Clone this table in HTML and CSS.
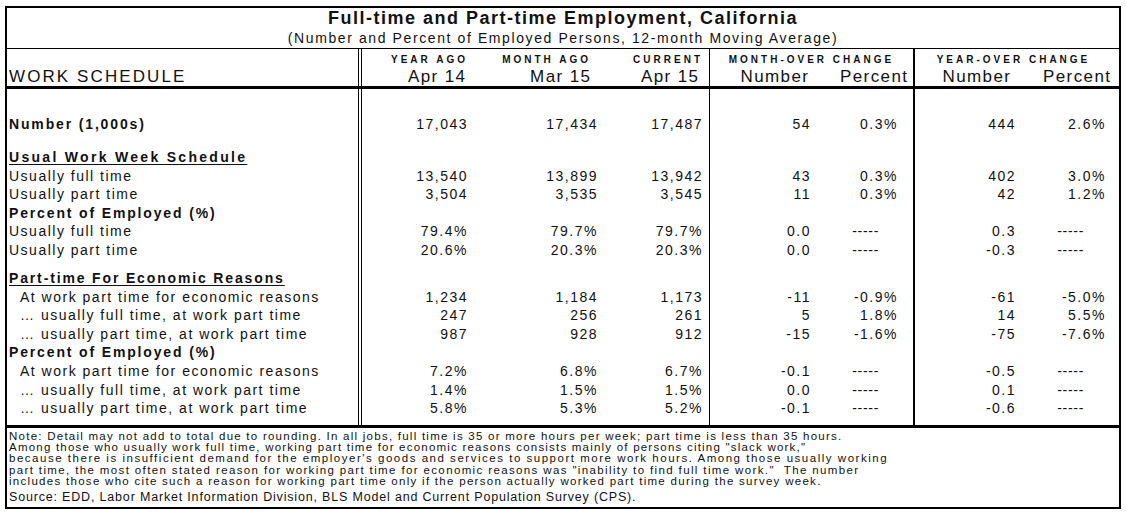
FILE: index.html
```html
<!DOCTYPE html>
<html>
<head>
<meta charset="utf-8">
<title>Full-time and Part-time Employment, California</title>
<link rel="stylesheet" href="styles.css">
</head>
<body>
<div class="sheet">
  <div class="titlebox">
    <div class="title">Full-time and Part-time Employment, California</div>
    <div class="subtitle">(Number and Percent of Employed Persons, 12-month Moving Average)</div>
  </div>

  <div class="head">
    <div class="h-lab">WORK SCHEDULE</div>
    <div class="cap k2 bl-dbl">YEAR AGO</div>
    <div class="cap k3 pr7">MONTH AGO</div>
    <div class="cap k4 pr6">CURRENT</div>
    <div class="cap mspan bl-1">MONTH-OVER CHANGE</div>
    <div class="cap yspan bl-2">YEAR-OVER CHANGE</div>
    <div class="big k2 bl-dbl hp1">Apr 14</div>
    <div class="big k3 hp2">Mar 15</div>
    <div class="big k4 hp3">Apr 15</div>
    <div class="big k5 bl-1 hp4">Number</div>
    <div class="big k6 hp5">Percent</div>
    <div class="big k7 bl-2 hp6">Number</div>
    <div class="big k8 hp7">Percent</div>
  </div>

  <div class="body">
    <div class="row g-a">
      <div class="lab b">Number (1,000s)</div>
      <div class="v1">17,043</div><div class="v2">17,434</div><div class="v3">17,487</div>
      <div class="m1">54</div><div class="m2">0.3%</div>
      <div class="y1">444</div><div class="y2">2.6%</div>
    </div>
    <div class="row g-b">
      <div class="lab b wide"><span class="u">Usual Work Week Schedule</span></div>
      <div class="v1"></div><div class="v2"></div><div class="v3"></div>
      <div class="m1"></div><div class="m2"></div>
      <div class="y1"></div><div class="y2"></div>
    </div>
    <div class="row">
      <div class="lab">Usually full time</div>
      <div class="v1">13,540</div><div class="v2">13,899</div><div class="v3">13,942</div>
      <div class="m1">43</div><div class="m2">0.3%</div>
      <div class="y1">402</div><div class="y2">3.0%</div>
    </div>
    <div class="row">
      <div class="lab">Usually part time</div>
      <div class="v1">3,504</div><div class="v2">3,535</div><div class="v3">3,545</div>
      <div class="m1">11</div><div class="m2">0.3%</div>
      <div class="y1">42</div><div class="y2">1.2%</div>
    </div>
    <div class="row">
      <div class="lab b">Percent of Employed (%)</div>
      <div class="v1"></div><div class="v2"></div><div class="v3"></div>
      <div class="m1"></div><div class="m2"></div>
      <div class="y1"></div><div class="y2"></div>
    </div>
    <div class="row">
      <div class="lab">Usually full time</div>
      <div class="v1">79.4%</div><div class="v2">79.7%</div><div class="v3">79.7%</div>
      <div class="m1">0.0</div><div class="m2 dash">-----</div>
      <div class="y1">0.3</div><div class="y2 dash">-----</div>
    </div>
    <div class="row">
      <div class="lab">Usually part time</div>
      <div class="v1">20.6%</div><div class="v2">20.3%</div><div class="v3">20.3%</div>
      <div class="m1">0.0</div><div class="m2 dash">-----</div>
      <div class="y1">-0.3</div><div class="y2 dash">-----</div>
    </div>
    <div class="row g-c">
      <div class="lab b"><span class="u">Part-time For Economic Reasons</span></div>
      <div class="v1"></div><div class="v2"></div><div class="v3"></div>
      <div class="m1"></div><div class="m2"></div>
      <div class="y1"></div><div class="y2"></div>
    </div>
    <div class="row">
      <div class="lab ind">At work part time for economic reasons</div>
      <div class="v1">1,234</div><div class="v2">1,184</div><div class="v3">1,173</div>
      <div class="m1">-11</div><div class="m2">-0.9%</div>
      <div class="y1">-61</div><div class="y2">-5.0%</div>
    </div>
    <div class="row">
      <div class="lab ind">… usually full time, at work part time</div>
      <div class="v1">247</div><div class="v2">256</div><div class="v3">261</div>
      <div class="m1">5</div><div class="m2">1.8%</div>
      <div class="y1">14</div><div class="y2">5.5%</div>
    </div>
    <div class="row">
      <div class="lab ind">… usually part time, at work part time</div>
      <div class="v1">987</div><div class="v2">928</div><div class="v3">912</div>
      <div class="m1">-15</div><div class="m2">-1.6%</div>
      <div class="y1">-75</div><div class="y2">-7.6%</div>
    </div>
    <div class="row">
      <div class="lab b">Percent of Employed (%)</div>
      <div class="v1"></div><div class="v2"></div><div class="v3"></div>
      <div class="m1"></div><div class="m2"></div>
      <div class="y1"></div><div class="y2"></div>
    </div>
    <div class="row">
      <div class="lab ind">At work part time for economic reasons</div>
      <div class="v1">7.2%</div><div class="v2">6.8%</div><div class="v3">6.7%</div>
      <div class="m1">-0.1</div><div class="m2 dash">-----</div>
      <div class="y1">-0.5</div><div class="y2 dash">-----</div>
    </div>
    <div class="row">
      <div class="lab ind">… usually full time, at work part time</div>
      <div class="v1">1.4%</div><div class="v2">1.5%</div><div class="v3">1.5%</div>
      <div class="m1">0.0</div><div class="m2 dash">-----</div>
      <div class="y1">0.1</div><div class="y2 dash">-----</div>
    </div>
    <div class="row g-end">
      <div class="lab ind">… usually part time, at work part time</div>
      <div class="v1">5.8%</div><div class="v2">5.3%</div><div class="v3">5.2%</div>
      <div class="m1">-0.1</div><div class="m2 dash">-----</div>
      <div class="y1">-0.6</div><div class="y2 dash">-----</div>
    </div>
  </div>

  <div class="notes">
    <div class="n1">Note: Detail may not add to total due to rounding. In all jobs, full time is 35 or more hours per week; part time is less than 35 hours.</div>
    <div class="nl l2">Among those who usually work full time, working part time for economic reasons consists mainly of persons citing "slack work,"</div>
    <div class="nl l3">because there is insufficient demand for the employer's goods and services to support more work hours. Among those usually working</div>
    <div class="nl l4">part time, the most often stated reason for working part time for economic reasons was "inability to find full time work."&nbsp; The number</div>
    <div class="nl l5">includes those who cite such a reason for working part time only if the person actually worked part time during the survey week.</div>
    <div class="src">Source: EDD, Labor Market Information Division, BLS Model and Current Population Survey (CPS).</div>
  </div>
</div>
</body>
</html>
```

FILE: styles.css
```css
* { box-sizing: border-box; }

body {
  margin: 0;
  background: #fff;
  font-family: "Liberation Sans", Arial, sans-serif;
  color: #111;
}

.sheet {
  margin: 6px 0 0 5px;
  width: 1116px;
  border: 2px solid #000;
}

/* title */
.titlebox {
  height: 41px;
  border-bottom: 1px solid #000;
  text-align: center;
}
.title {
  font-weight: bold;
  font-size: 18px;
  line-height: 20px;
  letter-spacing: 1.5px;
}
.subtitle {
  font-size: 14px;
  line-height: 20px;
  letter-spacing: 1.6px;
}

/* shared column template */
.head,
.row {
  display: grid;
  grid-template-columns: 351px 110px 130px 111px 102px 102px 103px 103px;
}

.bl-dbl { border-left: 4px double #000; }
.bl-1 { border-left: 1px solid #000; }
.bl-2 { border-left: 2px solid #000; }

/* header */
.head {
  grid-template-rows: 18px 19px;
  border-bottom: 3px solid #000;
  white-space: nowrap;
}
.h-lab {
  grid-column: 1;
  grid-row: 1 / 3;
  align-self: end;
  font-size: 17px;
  line-height: 19px;
  letter-spacing: 2.1px;
  padding-left: 2px;
}
.cap {
  grid-row: 1;
  font-weight: bold;
  font-size: 10px;
  line-height: 14px;
  padding-top: 4px;
  letter-spacing: 3px;
  text-align: right;
}
.big {
  grid-row: 2;
  font-size: 17px;
  line-height: 19px;
  letter-spacing: 1.4px;
  text-align: right;
}
.k2 { grid-column: 2; }
.k3 { grid-column: 3; }
.k4 { grid-column: 4; }
.k5 { grid-column: 5; }
.k6 { grid-column: 6; }
.k7 { grid-column: 7; }
.k8 { grid-column: 8; }
.mspan { grid-column: 5 / 7; text-align: center; }
.yspan { grid-column: 7 / 9; text-align: center; padding-right: 7px; }
.pr7 { padding-right: 7px; }
.pr6 { padding-right: 6px; }
.hp1 { padding-right: 1.6px; }
.hp2 { padding-right: 6.6px; }
.hp3 { padding-right: 9.6px; }
.hp4 { padding-right: 1.6px; }
.hp5 { padding-right: 4.6px; }
.hp6 { padding-right: 4.6px; }
.hp7 { padding-right: 7.6px; }

/* body */
.body {
  border-bottom: 3px solid #000;
}
.row > div {
  font-size: 14px;
  line-height: 18.6px;
  letter-spacing: 1.5px;
  white-space: nowrap;
  text-align: right;
}
.row > .lab {
  text-align: left;
  padding-left: 2px;
}
.row > .lab.ind { padding-left: 13px; }
.row > .lab.b {
  font-weight: bold;
  letter-spacing: 1.85px;
}
.row > .lab.b.wide { letter-spacing: 2.3px; }
.u {
  text-decoration: underline;
  text-decoration-thickness: 1px;
  text-underline-offset: 2px;
}
.row > .v1 { border-left: 4px double #000; }
.row > .v3 { padding-right: 6px; }
.row > .m1 { border-left: 1px solid #000; }
.row > .m2 { padding-right: 15px; }
.row > .y1 { border-left: 2px solid #000; }
.row > .y2 { padding-right: 13px; }
.row > .m2.dash { padding-right: 34px; letter-spacing: 0.7px; }
.row > .y2.dash { padding-right: 35px; letter-spacing: 0.7px; }

.row.g-a > div { padding-top: 26px; }
.row.g-b > div { padding-top: 14.4px; }
.row.g-c > div { padding-top: 9.4px; }
.row.g-end > div { padding-bottom: 7.2px; }

/* notes */
.notes {
  padding: 2px 0 2.5px 2px;
  font-size: 11.5px;
  letter-spacing: 1.25px;
  white-space: nowrap;
}
.n1 { line-height: 12px; }
.nl { line-height: 11.5px; }
.l2 { letter-spacing: 1.21px; }
.l3 { letter-spacing: 1.52px; }
.l4 { letter-spacing: 1.37px; }
.l5 { letter-spacing: 1.29px; }
.src {
  padding-top: 2.5px;
  font-size: 12.5px;
  line-height: 14px;
  letter-spacing: 0.82px;
}
```
